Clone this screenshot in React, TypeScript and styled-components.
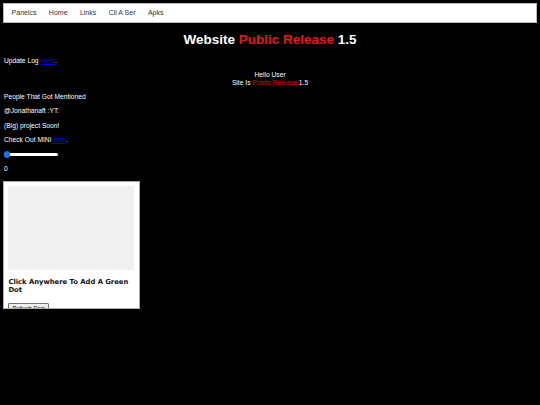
import React, { useState } from 'react';
import styled, { createGlobalStyle } from 'styled-components';

const GlobalStyle = createGlobalStyle`
  html, body {
    background: #000;
  }
  body {
    margin: 3.4px;
    color: #fff;
    font-family: "Liberation Sans", Arial, sans-serif;
    font-size: 6.7px;
    line-height: 7.7px;
  }
`;

const NavBar = styled.nav`
  display: flex;
  align-items: center;
  height: 19.5px;
  padding-left: 1px;
  background: #fff;
  border: 0.5px solid #bbb;
  box-sizing: border-box;
`;

const NavItem = styled.a`
  padding: 0 6.2px;
  color: #333;
  font-size: 7px;
  text-decoration: none;
  cursor: pointer;
`;

const Title = styled.h1`
  margin: 9.2px 0 9px;
  text-align: center;
  font-size: 13.5px;
  line-height: 15.5px;
  font-weight: bold;
  color: #fff;
`;

const Red = styled.span<{ $bright?: boolean }>`
  color: ${(p) => (p.$bright ? '#e31b1b' : '#e00000')};
`;

const Para = styled.p`
  margin: 6.7px 0;
  padding-left: 0.6px;
`;

const Link = styled.a`
  color: #0000ee;
  text-decoration: underline;
`;

const Greeting = styled.div`
  margin: 6.7px 0;
  text-align: center;
`;

const Slider = styled.input`
  display: block;
  -webkit-appearance: none;
  appearance: none;
  width: 54px;
  height: 8px;
  margin: 6.7px 0 0 0.6px;
  background: transparent;

  &::-webkit-slider-runnable-track {
    height: 3px;
    background: #fff;
    border-radius: 2px;
  }
  &::-webkit-slider-thumb {
    -webkit-appearance: none;
    width: 6.5px;
    height: 6.5px;
    margin-top: -1.75px;
    border-radius: 50%;
    background: #1a73e8;
    border: none;
  }
`;

const Card = styled.div`
  width: 137px;
  height: 128px;
  margin-top: 7.8px;
  padding: 4px 5.5px 0 4px;
  box-sizing: border-box;
  background: #fff;
  border: 0.5px solid #aaa;
  overflow: hidden;
  color: #111;
`;

const Canvas = styled.div`
  height: 84px;
  background: #f0f0f0;
  cursor: crosshair;
`;

const CardTitle = styled.h3`
  margin: 8.5px 0 0;
  font-family: "DejaVu Sans", Verdana, sans-serif;
  font-size: 6.8px;
  line-height: 8px;
  font-weight: bold;
`;

const SmallButton = styled.button`
  margin-top: 9px;
  padding: 1px 3px;
  font-family: "Liberation Sans", Arial, sans-serif;
  font-size: 5.6px;
  line-height: 7px;
  background: #efefef;
  border: 0.5px solid #767676;
  border-radius: 1px;
  color: #000;
`;

const navLinks = ['Panelcs', 'Home', 'Links', 'Cil A Ser', 'Apks'];

export default function App() {
  const [value, setValue] = useState(0);
  return (
    <>
      <GlobalStyle />
      <NavBar>
        {navLinks.map((l) => (
          <NavItem key={l}>{l}</NavItem>
        ))}
      </NavBar>
      <Title>
        Website <Red $bright>Public Release</Red> 1.5
      </Title>
      <Para>
        Update Log <Link>Here</Link>.
      </Para>
      <Greeting>
        Hello User
        <br />
        Site Is <Red>Public Release</Red> 1.5
      </Greeting>
      <Para>People That Got Mentioned</Para>
      <Para>@Jonathanaft :YT:</Para>
      <Para>(Big) project Soon!</Para>
      <Para>
        Check Out MINi<Link>Here</Link>.
      </Para>
      <Slider
        type="range"
        min={0}
        max={100}
        value={value}
        onChange={(e) => setValue(Number(e.target.value))}
      />
      <Para>{value}</Para>
      <Card>
        <Canvas />
        <CardTitle>Click Anywhere To Add A Green Dot</CardTitle>
        <SmallButton>Refresh Dots</SmallButton>
      </Card>
    </>
  );
}
